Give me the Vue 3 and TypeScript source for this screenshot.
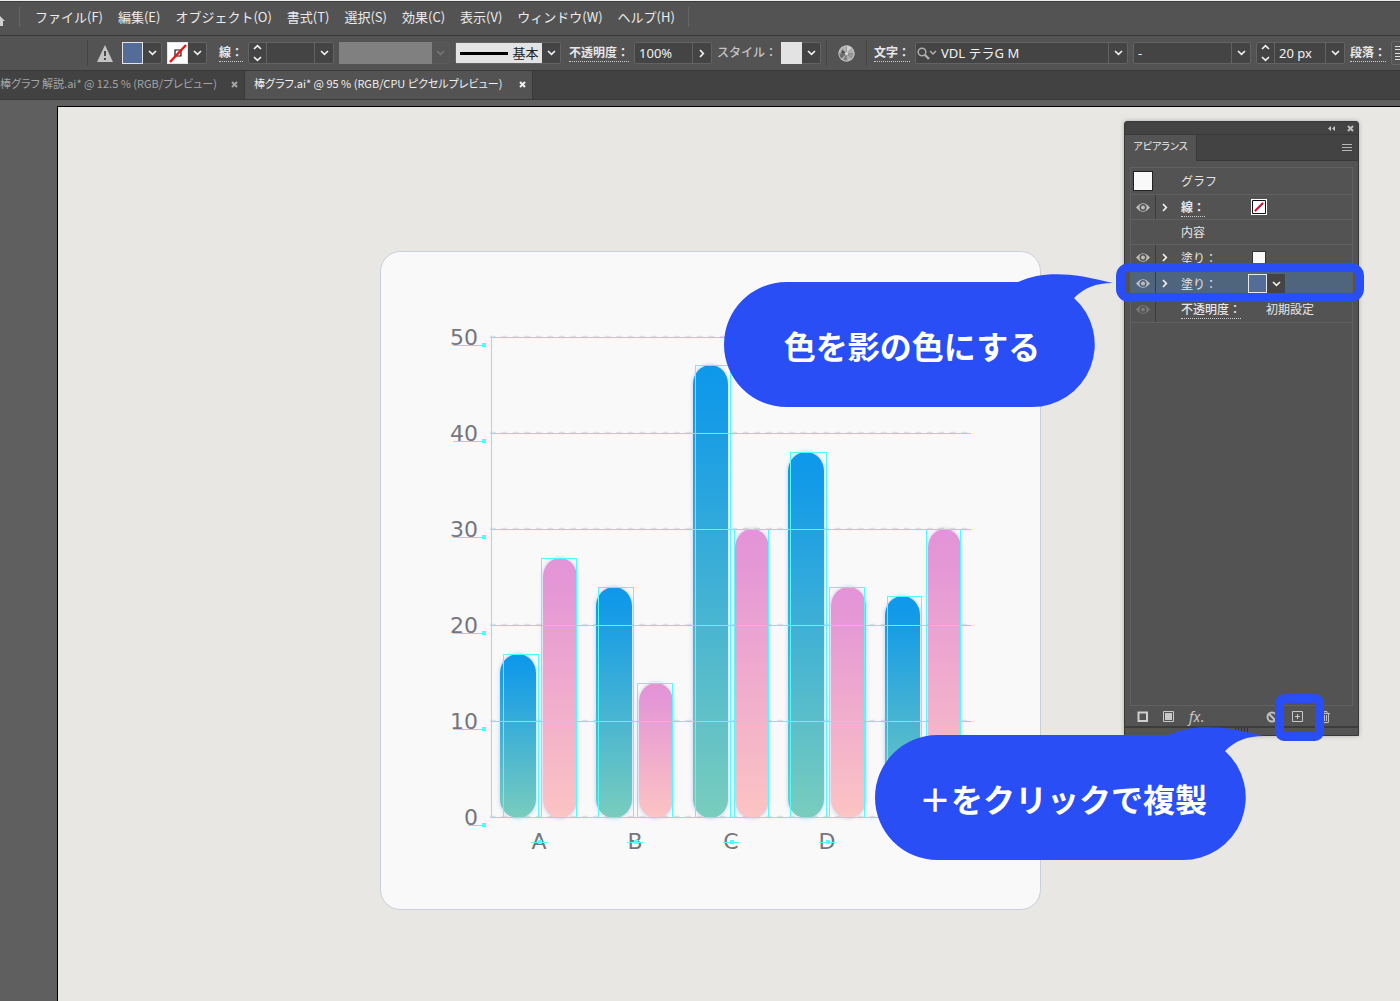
<script setup lang="ts">
import { ref } from 'vue'

interface Bar {
  kind: 'blue' | 'pink'
  x: number
  width: number
  frameX: number
  frameWidth: number
  top: number
}

const menus: string[] = [
  'ファイル(F)',
  '編集(E)',
  'オブジェクト(O)',
  '書式(T)',
  '選択(S)',
  '効果(C)',
  '表示(V)',
  'ウィンドウ(W)',
  'ヘルプ(H)',
]

const opacity = ref('100%')
const fontName = ref('VDL テラG M')
const fontStyle = ref('-')
const fontSize = ref('20 px')
const strokeWidth = ref('')

const baseline = 817
const ticks: number[] = [50, 40, 30, 20, 10, 0]
const tickY = (value: number): number => baseline - Math.round(value * 9.6)

const categories = [
  { name: 'A', x: 539 },
  { name: 'B', x: 635 },
  { name: 'C', x: 731 },
  { name: 'D', x: 827 },
]

const bars: Bar[] = [
  { kind: 'blue', x: 500, width: 36, frameX: 503, frameWidth: 35, top: 654 },
  { kind: 'pink', x: 543, width: 34, frameX: 541, frameWidth: 35, top: 558 },
  { kind: 'blue', x: 596, width: 36, frameX: 598, frameWidth: 35, top: 587 },
  { kind: 'pink', x: 639, width: 34, frameX: 637, frameWidth: 35, top: 683 },
  { kind: 'blue', x: 693, width: 35, frameX: 695, frameWidth: 35, top: 365 },
  { kind: 'pink', x: 735, width: 34, frameX: 734, frameWidth: 34, top: 529 },
  { kind: 'blue', x: 788, width: 36, frameX: 790, frameWidth: 36, top: 452 },
  { kind: 'pink', x: 831, width: 35, frameX: 829, frameWidth: 35, top: 587 },
  { kind: 'blue', x: 885, width: 35, frameX: 887, frameWidth: 34, top: 596 },
  { kind: 'pink', x: 928, width: 33, frameX: 926, frameWidth: 34, top: 529 },
]

const callouts = [
  { id: 'color', text: '色を影の色にする' },
  { id: 'duplicate', text: '＋をクリックで複製' },
]
</script>

<template>
  <div class="app">
    <nav class="menubar" aria-label="メニュー">
      <button class="home" type="button" aria-label="ホーム">
        <svg width="6" height="14" viewBox="0 0 6 14"><path d="M-6 8 L-1 2 L5 8 H3 V13 H0 V9 H-6Z" fill="#d0d0d0" /></svg>
      </button>
      <span class="menu-sep"></span>
      <button v-for="menu in menus" :key="menu" class="menu" type="button">{{ menu }}</button>
      <span class="menu-sep"></span>
    </nav>

    <div class="options">
      <span class="sep"></span>
      <svg class="warn" width="16" height="17" viewBox="0 0 16 17">
        <path d="M8 0 L16 17 H0Z" fill="#c4c4c4" />
        <path d="M7 6 H9 V11 H7Z M7 13 H9 V15 H7Z" fill="#4a4a4a" />
      </svg>
      <div class="combo fill-combo">
        <button class="swatch blue" type="button" aria-label="塗り"></button>
        <button class="chev" type="button" aria-label="塗りの一覧"><svg width="9" height="6" viewBox="0 0 9 6"><path d="M1 1 L4.5 4.3 L8 1" /></svg></button>
      </div>
      <div class="combo line-combo">
        <button class="swatch none" type="button" aria-label="線">
          <svg width="20" height="20" viewBox="0 0 20 20">
            <path d="M7 7 H13 V13 H7Z" fill="none" stroke="#111" stroke-width="1.2" />
            <path d="M2 19 L18 2" stroke="#f21010" stroke-width="2.4" />
          </svg>
        </button>
        <button class="chev" type="button" aria-label="線の一覧"><svg width="9" height="6" viewBox="0 0 9 6"><path d="M1 1 L4.5 4.3 L8 1" /></svg></button>
      </div>
      <label class="label stroke-label" for="stroke-width">線：</label>
      <div class="combo stroke-field">
        <button class="spin" type="button" aria-label="線幅を増減">
          <svg width="9" height="18" viewBox="0 0 9 18"><path d="M1 5 L4.5 1.6 L8 5 M1 13 L4.5 16.4 L8 13" /></svg>
        </button>
        <input id="stroke-width" v-model="strokeWidth" type="text" />
        <button class="chev" type="button" aria-label="線幅の一覧"><svg width="9" height="6" viewBox="0 0 9 6"><path d="M1 1 L4.5 4.3 L8 1" /></svg></button>
      </div>
      <div class="combo profile disabled">
        <span class="profile-view"></span>
        <button class="chev" type="button" disabled aria-label="プロファイル"><svg width="9" height="6" viewBox="0 0 9 6"><path d="M1 1 L4.5 4.3 L8 1" /></svg></button>
      </div>
      <div class="combo brush">
        <button class="brush-view" type="button"><span class="brush-line"></span>基本</button>
        <button class="chev" type="button" aria-label="ブラシの一覧"><svg width="9" height="6" viewBox="0 0 9 6"><path d="M1 1 L4.5 4.3 L8 1" /></svg></button>
      </div>
      <label class="label opacity-label" for="opacity">不透明度：</label>
      <div class="combo opacity-field">
        <input id="opacity" v-model="opacity" type="text" />
        <button class="chev" type="button" aria-label="不透明度の一覧"><svg width="6" height="9" viewBox="0 0 6 9"><path d="M1 1 L4.3 4.5 L1 8" /></svg></button>
      </div>
      <span class="label plain">スタイル：</span>
      <div class="combo style-combo">
        <button class="swatch light" type="button" aria-label="スタイル"></button>
        <button class="chev" type="button" aria-label="スタイルの一覧"><svg width="9" height="6" viewBox="0 0 9 6"><path d="M1 1 L4.5 4.3 L8 1" /></svg></button>
      </div>
      <span class="sep"></span>
      <button class="recolor" type="button" aria-label="オブジェクトを再配色">
        <svg width="17" height="17" viewBox="0 0 17 17">
          <circle cx="8.500" cy="8.500" r="8" fill="#b0b0b0" />
          <path d="M8.500 8.500 L8.500 .5 A8 8 0 0 1 14.200 2.900Z" fill="#d0d0d0" />
          <path d="M8.500 8.500 L.5 8.500 A8 8 0 0 0 2.900 14.200Z" fill="#6c6c6c" />
          <path d="M8.500 8.500 L5 15.700 A8 8 0 0 0 9.500 16.400Z" fill="#7c7c7c" />
          <path d="M8.500 8.500 L16.500 8.500 A8 8 0 0 1 14.200 14.200Z" fill="#989898" />
          <path d="M8.500 8.500 L4 5 L3 9Z" fill="#444" />
          <path d="M8.500 .5 V16.500 M.5 8.500 H16.500 M2.900 2.900 L14.200 14.200 M14.200 2.900 L2.900 14.200" stroke="#858585" stroke-width=".7" />
          <circle cx="8.500" cy="8.500" r="7.600" fill="none" stroke="#c8c8c8" stroke-width=".9" />
          <circle cx="8.500" cy="8.500" r="1.500" fill="#e0e0e0" />
        </svg>
      </button>
      <span class="sep"></span>
      <label class="label font-label" for="font-name">文字：</label>
      <div class="combo font-field">
        <svg class="search" width="20" height="13" viewBox="0 0 20 13">
          <circle cx="5" cy="5" r="3.800" /><path d="M8 8 L12 12" stroke-width="2.400" /><path d="M13 4 L16 7 L19 4" />
        </svg>
        <input id="font-name" v-model="fontName" type="text" />
        <button class="chev" type="button" aria-label="フォントの一覧"><svg width="9" height="6" viewBox="0 0 9 6"><path d="M1 1 L4.5 4.3 L8 1" /></svg></button>
      </div>
      <div class="combo weight-field">
        <input v-model="fontStyle" type="text" aria-label="フォントスタイル" />
        <button class="chev" type="button" aria-label="フォントスタイルの一覧"><svg width="9" height="6" viewBox="0 0 9 6"><path d="M1 1 L4.5 4.3 L8 1" /></svg></button>
      </div>
      <div class="combo size-field">
        <button class="spin" type="button" aria-label="サイズを増減">
          <svg width="9" height="18" viewBox="0 0 9 18"><path d="M1 5 L4.5 1.6 L8 5 M1 13 L4.5 16.4 L8 13" /></svg>
        </button>
        <input v-model="fontSize" type="text" aria-label="フォントサイズ" />
        <button class="chev" type="button" aria-label="サイズの一覧"><svg width="9" height="6" viewBox="0 0 9 6"><path d="M1 1 L4.5 4.3 L8 1" /></svg></button>
      </div>
      <span class="label">段落：</span>
      <button class="align" type="button" aria-label="左揃え">
        <svg width="24" height="16" viewBox="0 0 24 16"><path d="M0 1.500 H14 M0 4.500 H9 M0 8.500 H14 M0 11.500 H9 M0 14.500 H14" stroke="#e0e0e0" /></svg>
      </button>
    </div>

    <div class="tabs" role="tablist">
      <div class="tab first">
        <button class="tab-name" type="button" role="tab">棒グラフ 解説.ai* @ 12.5 % (RGB/プレビュー)</button>
        <button class="close" type="button" aria-label="閉じる"><svg width="7" height="7" viewBox="0 0 7 7"><path d="M1 1 L6 6 M6 1 L1 6" /></svg></button>
      </div>
      <div class="tab active">
        <button class="tab-name" type="button" role="tab" aria-selected="true">棒グラフ.ai* @ 95 % (RGB/CPU ピクセルプレビュー)</button>
        <button class="close" type="button" aria-label="閉じる"><svg width="7" height="7" viewBox="0 0 7 7"><path d="M1 1 L6 6 M6 1 L1 6" /></svg></button>
      </div>
    </div>

    <main class="workspace">
      <div class="canvas">
        <svg class="artboard" width="661" height="659" viewBox="380 251 661 659" role="img" aria-label="棒グラフ">
          <defs>
            <linearGradient id="blue" x1="0" y1="0" x2="0" y2="1">
              <stop offset="0" stop-color="#0d98eb" /><stop offset="0.100" stop-color="#149be7" /><stop offset="1" stop-color="#79cdbd" />
            </linearGradient>
            <linearGradient id="pink" x1="0" y1="0" x2="0" y2="1">
              <stop offset="0" stop-color="#e294d8" /><stop offset="0.100" stop-color="#e496d6" /><stop offset="1" stop-color="#fcc4c3" />
            </linearGradient>
          </defs>
          <rect x="380.500" y="251.500" width="660" height="658" rx="20" fill="#f9f9f9" stroke="#c9cfda" />
          <path v-for="t in ticks" :key="'d' + t" class="dash" :d="`M491 ${tickY(t)} H971`" />
          <rect v-for="(b, i) in bars" :key="'b' + i" class="bar" :x="b.x" :y="b.top" :width="b.width" :height="baseline - b.top + 1" :rx="b.width / 2" ry="19" :fill="`url(#${b.kind})`" />
          <g class="guide">
            <path d="M491.500 337 V818" />
            <path v-for="t in ticks" :key="'g' + t" :d="`M491 ${tickY(t) + 0.5} H971`" />
            <rect v-for="(b, i) in bars" :key="'f' + i" :x="b.frameX + 0.5" :y="b.top + 0.5" :width="b.frameWidth" :height="baseline - b.top" />
          </g>
          <g v-for="t in ticks" :key="'t' + t">
            <text class="axis" x="478" :y="tickY(t) + 8" text-anchor="end">{{ t }}</text>
            <path class="guide" :d="`M${t ? 453 : 468} ${tickY(t) + 8.5} H483`" />
            <rect class="anchor" x="482" :y="tickY(t) + 6" width="4" height="4" />
          </g>
          <g v-for="c in categories" :key="c.name">
            <text class="axis" :x="c.x" y="849" text-anchor="middle">{{ c.name }}</text>
            <path class="guide" :d="`M${c.x - 8} 842.5 H${c.x + 8}`" />
            <rect class="anchor" :x="c.x - 1" y="840" width="4" height="4" />
          </g>
        </svg>

        <section class="panel" aria-label="アピアランス">
          <div class="panel-title">
            <button type="button" aria-label="折りたたむ"><svg width="8" height="5" viewBox="0 0 8 5"><path d="M3 0 V5 L0 2.500Z M7 0 V5 L4 2.500Z" fill="#c8c8c8" /></svg></button>
            <button type="button" aria-label="閉じる"><svg class="x" width="7" height="7" viewBox="0 0 7 7"><path d="M1 1 L6 6 M6 1 L1 6" /></svg></button>
          </div>
          <div class="panel-tabs">
            <button class="panel-tab" type="button">アピアランス</button>
            <button class="panel-menu" type="button" aria-label="パネルメニュー"><svg width="10" height="8" viewBox="0 0 10 8"><path d="M0 .5 H10 M0 3.500 H10 M0 6.500 H10" stroke="#b5b5b5" /></svg></button>
          </div>
          <div class="list">
            <div class="row head"><span class="thumb"></span><span class="name">グラフ</span></div>
            <div class="row">
              <button class="eye" type="button" aria-label="線の表示"><svg width="14" height="9" viewBox="0 0 14 9"><path fill-rule="evenodd" d="M0 4.500 Q7 -4 14 4.500 Q7 13 0 4.500Z M7 1 A3.500 3.500 0 1 0 7 8 A3.500 3.500 0 1 0 7 1Z" /><circle cx="7" cy="4.500" r="2" /></svg></button>
              <button class="open" type="button" aria-label="線を開く"><svg width="6" height="9" viewBox="0 0 6 9"><path d="M1 1 L4.300 4.500 L1 8" /></svg></button>
              <span class="name dotted">線：</span>
              <button class="none-swatch" type="button" aria-label="線なし"><svg width="16" height="16" viewBox="0 0 16 16"><path d="M1.500 1.500 H14.500 V14.500 H1.500Z" fill="#fff" stroke="#111" /><path d="M4.500 11.500 L11.500 4.500" stroke="#d3103a" stroke-width="2.200" stroke-linecap="round" /></svg></button>
            </div>
            <div class="row"><span class="name">内容</span></div>
            <div class="row fill">
              <button class="eye" type="button" aria-label="塗りの表示"><svg width="14" height="9" viewBox="0 0 14 9"><path fill-rule="evenodd" d="M0 4.500 Q7 -4 14 4.500 Q7 13 0 4.500Z M7 1 A3.500 3.500 0 1 0 7 8 A3.500 3.500 0 1 0 7 1Z" /><circle cx="7" cy="4.500" r="2" /></svg></button>
              <button class="open" type="button" aria-label="塗りを開く"><svg width="6" height="9" viewBox="0 0 6 9"><path d="M1 1 L4.300 4.500 L1 8" /></svg></button>
              <span class="name">塗り：</span>
              <button class="white-swatch" type="button" aria-label="白"></button>
            </div>
            <div class="row fill selected">
              <button class="eye" type="button" aria-label="塗りの表示"><svg width="14" height="9" viewBox="0 0 14 9"><path fill-rule="evenodd" d="M0 4.500 Q7 -4 14 4.500 Q7 13 0 4.500Z M7 1 A3.500 3.500 0 1 0 7 8 A3.500 3.500 0 1 0 7 1Z" /><circle cx="7" cy="4.500" r="2" /></svg></button>
              <button class="open" type="button" aria-label="塗りを開く"><svg width="6" height="9" viewBox="0 0 6 9"><path d="M1 1 L4.300 4.500 L1 8" /></svg></button>
              <span class="name">塗り：</span>
              <button class="blue-swatch" type="button" aria-label="影の色"></button>
              <button class="pick" type="button" aria-label="色の一覧"><svg width="9" height="6" viewBox="0 0 9 6"><path d="M1 1 L4.5 4.3 L8 1" /></svg></button>
            </div>
            <div class="row fill">
              <button class="eye dim" type="button" aria-label="不透明度の表示"><svg width="14" height="9" viewBox="0 0 14 9"><path fill-rule="evenodd" d="M0 4.500 Q7 -4 14 4.500 Q7 13 0 4.500Z M7 1 A3.500 3.500 0 1 0 7 8 A3.500 3.500 0 1 0 7 1Z" /><circle cx="7" cy="4.500" r="2" /></svg></button>
              <span class="open"></span>
              <span class="name dotted wide">不透明度：</span>
              <span class="value">初期設定</span>
            </div>
          </div>
          <div class="panel-foot">
            <button type="button" aria-label="新規線を追加"><svg width="12" height="12" viewBox="0 0 12 12"><path d="M1.500 1.500 H10 V10 H1.500Z" fill="none" stroke="#d0d0d0" stroke-width="2" /></svg></button>
            <button type="button" aria-label="新規塗りを追加"><svg width="12" height="12" viewBox="0 0 12 12"><path d="M.5 .5 H10.500 V10.500 H.5Z" fill="none" stroke="#c8c8c8" /><path d="M2 2 H9 V9 H2Z" fill="#c8c8c8" /></svg></button>
            <button class="fx" type="button" aria-label="新規効果を追加"><i>fx</i>.</button>
            <button class="clear" type="button" aria-label="アピアランスを消去"><svg width="12" height="12" viewBox="0 0 12 12"><circle cx="6" cy="6" r="4.500" fill="none" stroke="#c0c0c0" stroke-width="2" /><path d="M3 3 L9 9" stroke="#c0c0c0" stroke-width="2" /></svg></button>
            <button class="add" type="button" aria-label="選択した項目を複製"><svg width="12" height="12" viewBox="0 0 12 12"><path d="M.5 .5 H10.500 V10.500 H.5Z M3 5.500 H8 M5.500 3 V8" fill="none" stroke="#c8c8c8" /></svg></button>
            <button class="trash" type="button" aria-label="選択した項目を削除"><svg width="10" height="12" viewBox="0 0 10 12"><path d="M0 2.500 H9 M3 2.500 V.5 H6 V2.500 M1.500 3 V11.500 H7.500 V3 M3.500 4 V10 M5.500 4 V10" fill="none" stroke="#c0c0c0" /></svg></button>
          </div>
          <div class="panel-grip"><span></span></div>
        </section>

        <div v-for="c in callouts" :key="c.id" class="callout" :class="c.id">
          <svg width="390" height="136" viewBox="0 0 390 136">
            <path d="M62.500 10 H294 C320 -2 350 1 389 11 C372 11 360 16 350 26 A62.500 62.500 0 0 1 307 135 H62.500 A62.500 62.500 0 0 1 62.500 10Z" fill="#2a4ef5" />
          </svg>
          <p>{{ c.text }}</p>
        </div>
        <span class="ring row-ring"></span>
        <span class="ring add-ring"></span>
      </div>
    </main>
  </div>
</template>

<style>
body {
  margin: 0;
  background: #5f5f5f;
}
</style>

<style scoped>
.app {
  display: flex;
  flex-direction: column;
  min-height: 100vh;
  overflow: hidden;
  color: #e6e6e6;
  font: 12px/18px "Noto Sans", "Noto Sans CJK JP", sans-serif;
}
* {
  box-sizing: border-box;
}
button,
input {
  margin: 0;
  padding: 0;
  border: 0;
  border-radius: 0;
  background: none;
  color: inherit;
  font: inherit;
}
button {
  display: flex;
  align-items: center;
  justify-content: center;
  flex: none;
  white-space: nowrap;
}
svg {
  display: block;
  flex: none;
}
.menubar {
  display: flex;
  align-items: center;
  height: 36px;
  padding-bottom: 2px;
  border-top: 1px solid #eee;
  border-bottom: 1px solid #383838;
  background: #535353;
  box-shadow: inset 0 1px #3c3c3c;
  font: 13px/18px "Noto Sans CJK JP", sans-serif;
  color: #ececec;
}
.home {
  width: 6px;
  padding-top: 6px;
}
.menu {
  margin-left: 15px;
}
.menu-sep {
  width: 1px;
  height: 20px;
  margin-left: 13px;
  background: #666;
}
.options {
  display: flex;
  align-items: center;
  height: 35px;
  padding-left: 87px;
  border-bottom: 1px solid #383838;
  background: #535353;
}
.options > * {
  flex: none;
}
.sep {
  width: 1px;
  height: 26px;
  background: #444;
}
.warn {
  margin: 0 9px;
}
.combo {
  display: flex;
  height: 22px;
  margin-right: 5px;
  border: 1px solid #636363;
  border-radius: 2px;
  background: #444;
}
.combo input {
  flex: 1;
  min-width: 0;
  padding: 0 4px;
  font: 13px/20px "Noto Sans", "Noto Sans CJK JP", sans-serif;
  color: #f2f2f2;
}
.chev,
.spin {
  width: 18px;
}
.combo input + .chev {
  width: 19px;
  border-left: 1px solid #636363;
}
.spin {
  border-right: 1px solid #636363;
}
.chev svg,
.spin svg,
.pick svg,
.open svg {
  fill: none;
  stroke: #f0f0f0;
  stroke-width: 1.7;
}
.swatch {
  width: 21px;
  margin: -1px 0 -1px -1px;
  border: 1px solid #e4e4e4;
}
.swatch.blue {
  background: #546d98;
}
.swatch.none {
  background: #fff;
}
.swatch.light {
  background: #e3e3e3;
}
.label {
  margin-right: 5px;
  border-bottom: 1px dotted #ccc;
  font-weight: 700;
  line-height: 16px;
}
.label.plain {
  margin-right: 4px;
  border-color: transparent;
  color: #c4c4c4;
  font-weight: 500;
}
.stroke-label,
.font-label {
  margin-left: 7px;
}
.opacity-label {
  margin-left: 3px;
}
.stroke-field {
  width: 86px;
}
.profile {
  width: 111px;
}
.profile-view {
  flex: 1;
  margin: -1px;
  background: #808080;
}
.disabled {
  border-color: #5a5a5a;
  background: #555;
}
.disabled .chev svg {
  stroke: #777;
}
.brush {
  width: 106px;
}
.brush-view {
  flex: 1;
  gap: 5px;
  background: #e3e3e3;
  color: #222;
  font-size: 13px;
}
.brush-line {
  width: 48px;
  height: 3px;
  background: #000;
}
.opacity-field {
  width: 78px;
}
.style-combo {
  width: 40px;
}
.recolor {
  margin: 0 11px;
}
.font-field {
  width: 213px;
}
.weight-field {
  width: 118px;
}
.size-field {
  width: 89px;
}
.search {
  margin: 4px 0 0 1px;
  fill: none;
  stroke: #b0b0b0;
  stroke-width: 1.5;
}
.align {
  width: 32px;
  height: 24px;
  border: 1px solid #666;
  border-radius: 2px;
}
.tabs {
  display: flex;
  height: 29px;
  border-bottom: 1px solid #383838;
  background: #424242;
  font: 11px/18px "Noto Sans CJK JP", sans-serif;
  font-feature-settings: "palt";
}
.tab {
  display: flex;
  justify-content: space-between;
  align-items: center;
  width: 288px;
  padding: 0 6px 2px 9px;
  border-right: 1px solid #383838;
  color: #a5a5a5;
}
.tab.first {
  width: 245px;
  padding-left: 0;
}
.tab.active {
  background: #535353;
  color: #f0f0f0;
}
.tab-name {
  padding-bottom: 2px;
}
.close svg,
.x {
  stroke: currentColor;
  stroke-width: 2;
}
.workspace {
  display: flex;
  flex: 1;
  padding: 6px 0 0 57px;
  background: #5f5f5f;
}
.canvas {
  position: relative;
  flex: 1;
  min-height: 820px;
  border: 1px solid #000;
  border-width: 1px 0 0 1px;
  background: #e8e7e3;
}
.artboard {
  position: absolute;
  left: 322px;
  top: 144px;
}
.dash {
  stroke: #dfdfdf;
  stroke-width: 2.6;
  stroke-linecap: round;
  stroke-dasharray: 3.5 8;
}
.bar {
  filter: drop-shadow(0 0 2px rgba(70, 110, 210, 0.35));
}
.guide {
  fill: none;
  stroke: #4ffdff;
  stroke-width: 1;
}
.anchor {
  fill: #4ffdff;
}
.axis {
  font: 22px "DejaVu Sans", sans-serif;
  fill: #76767e;
}
.panel {
  position: absolute;
  left: 1066px;
  top: 14px;
  display: flex;
  flex-direction: column;
  width: 235px;
  height: 615px;
  border: 1px solid #383838;
  border-radius: 3px 3px 0 0;
  background: #535353;
  box-shadow: 0 0 4px rgba(0, 0, 0, 0.25);
}
.panel-title {
  display: flex;
  align-items: center;
  justify-content: flex-end;
  gap: 11px;
  height: 13px;
  padding-right: 4px;
  border-bottom: 1px solid #383838;
  background: #434343;
  color: #c0c0c0;
}
.panel-tabs {
  display: flex;
  justify-content: space-between;
  height: 26px;
  padding-right: 6px;
  background: linear-gradient(#383838, #383838) bottom / 100% 1px no-repeat #434343;
}
.panel-tab {
  width: 72px;
  padding-bottom: 4px;
  border-right: 1px solid #383838;
  background: #535353;
  color: #eee;
  font: 10px/18px "Noto Sans CJK JP", sans-serif;
  font-feature-settings: "palt";
}
.list {
  flex: 1;
  margin: 6px 5px 0;
  border: 1px solid #606060;
}
.row {
  display: flex;
  align-items: center;
  position: relative;
  height: 25px;
  border-bottom: 1px solid #606060;
}
.row.head {
  height: 27px;
}
.row.fill {
  height: 26px;
}
.row.selected {
  background: #4f657d;
}
.thumb {
  width: 20px;
  height: 20px;
  margin-left: 2px;
  border: 1px solid #222;
  background: #f9f9f9;
}
.eye {
  width: 25px;
  height: 100%;
  border-right: 1px solid #3c3c3c;
  fill: #bdbdbd;
}
.eye.dim {
  fill: #7b7b7b;
}
.open {
  width: 18px;
}
.name {
  width: 68px;
  margin-left: 7px;
  padding-top: 2px;
  line-height: 16px;
}
.row > .name:first-child {
  margin-left: 50px;
}
.thumb + .name {
  margin-left: 28px;
}
.name.dotted {
  width: auto;
  border-bottom: 1px dotted #ccc;
  font-weight: 700;
}
.name.wide {
  margin-right: 25px;
  font-weight: 500;
}
.none-swatch {
  margin-left: 46px;
  background: #fff;
}
.white-swatch {
  width: 14px;
  height: 14px;
  margin-left: 3px;
  border: 1px solid #333;
  background: #f9f9f9;
}
.blue-swatch {
  width: 19px;
  height: 19px;
  margin-left: -1px;
  border: 1px solid #e8e8e8;
  background: #546d98;
}
.pick {
  width: 18px;
  height: 19px;
  background: #444;
}
.panel-foot {
  display: flex;
  align-items: center;
  height: 20px;
  padding: 2px 0 0 12px;
  gap: 14px;
}
.fx {
  color: #c8c8c8;
  font: 14px/16px "Noto Sans", sans-serif;
}
.clear {
  margin-left: 48px;
}
.trash {
  margin-left: 3px;
}
.panel-grip {
  display: flex;
  justify-content: center;
  height: 9px;
  border-top: 2px solid #3c3c3c;
}
.panel-grip span {
  width: 14px;
  height: 4px;
  background: repeating-linear-gradient(90deg, #333 0 1px, #535353 1px 3px);
}
.callout {
  position: absolute;
  left: 666px;
  top: 165px;
  width: 390px;
  height: 136px;
}
.callout.duplicate {
  left: 817px;
  top: 618px;
}
.callout svg {
  position: absolute;
}
.callout p {
  position: relative;
  margin: 0;
  padding: 49px 14px 0 0;
  color: #fff;
  text-align: center;
  font: 700 32px/48px "Noto Sans CJK JP", sans-serif;
}
.ring {
  position: absolute;
  border: 9px solid #2a4ef5;
}
.row-ring {
  left: 1058px;
  top: 156px;
  width: 248px;
  height: 39px;
  border-radius: 13px;
}
.add-ring {
  left: 1217px;
  top: 587px;
  width: 49px;
  height: 47px;
  border-radius: 9px;
}
</style>
